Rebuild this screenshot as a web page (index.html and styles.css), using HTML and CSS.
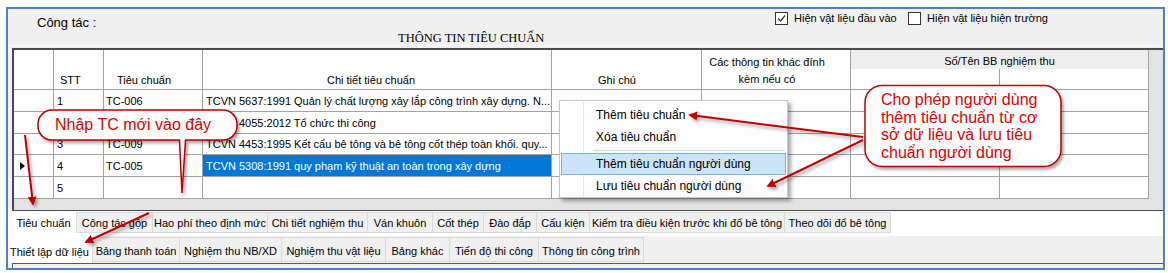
FILE: index.html
```html
<!DOCTYPE html>
<html lang="vi">
<head>
<meta charset="utf-8">
<title>Thông tin tiêu chuẩn</title>
<link rel="stylesheet" href="styles.css">
</head>
<body>
<div class="window">
  <div class="top">
    <div class="top-row">
      <div class="cong-tac">Công tác :</div>
      <div class="checks">
        <div class="check check-first">
          <span class="box"><svg width="11" height="11" viewBox="0 0 11 11"><polyline points="2,5.5 4.5,8 9,2.5" fill="none" stroke="#333" stroke-width="1.2"/></svg></span>
          <span>Hiện vật liệu đầu vào</span>
        </div>
        <div class="check">
          <span class="box"></span>
          <span>Hiện vật liệu hiện trường</span>
        </div>
      </div>
    </div>
    <div class="title">THÔNG TIN TIÊU CHUẨN</div>
    <div class="top-sep"></div>
  </div>

  <div class="grid-panel">
    <div class="grid">
      <div class="c h h-rh"></div>
      <div class="c h h-stt">STT</div>
      <div class="c h h-tc">Tiêu chuẩn</div>
      <div class="c h h-ct">Chi tiết tiêu chuẩn</div>
      <div class="c h h-gc">Ghi chú</div>
      <div class="c h h-kh">Các thông tin khác đính<br>kèm nếu có</div>
      <div class="c band">Số/Tên BB nghiệm thu</div>
      <div class="c sub"></div>
      <div class="c sub"></div>

      <div class="c rh"></div><div class="c">1</div><div class="c">TC-006</div><div class="c">TCVN 5637:1991 Quản lý chất lượng xây lắp công trình xây dựng. N...</div><div class="c"></div><div class="c"></div><div class="c"></div><div class="c"></div>
      <div class="c rh"></div><div class="c"></div><div class="c"></div><div class="c">TCVN 4055:2012 Tổ chức thi công</div><div class="c"></div><div class="c"></div><div class="c"></div><div class="c"></div>
      <div class="c rh"></div><div class="c">3</div><div class="c">TC-009</div><div class="c">TCVN 4453:1995 Kết cấu bê tông và bê tông cốt thép toàn khối. quy...</div><div class="c"></div><div class="c"></div><div class="c"></div><div class="c"></div>
      <div class="c rh"><span class="cur"></span></div><div class="c">4</div><div class="c">TC-005</div><div class="c selcell">TCVN 5308:1991 quy phạm kỹ thuật an toàn trong xây dựng</div><div class="c"></div><div class="c"></div><div class="c"></div><div class="c"></div>
      <div class="c rh"></div><div class="c">5</div><div class="c"></div><div class="c"></div><div class="c"></div><div class="c"></div><div class="c"></div><div class="c"></div>
    </div>
  </div>

  <div class="tabs tabs-inner">
    <div class="tab sel">Tiêu chuẩn</div>
    <div class="tab">Công tác gộp</div>
    <div class="tab">Hao phí theo định mức</div>
    <div class="tab">Chi tiết nghiệm thu</div>
    <div class="tab">Ván khuôn</div>
    <div class="tab">Cốt thép</div>
    <div class="tab">Đào đắp</div>
    <div class="tab">Cấu kiện</div>
    <div class="tab">Kiểm tra điều kiện trước khi đổ bê tông</div>
    <div class="tab">Theo dõi đổ bê tông</div>
  </div>

  <div class="tabs tabs-outer">
    <div class="tab sel">Thiết lập dữ liệu</div>
    <div class="tab">Bảng thanh toán</div>
    <div class="tab">Nghiệm thu NB/XD</div>
    <div class="tab">Nghiệm thu vật liệu</div>
    <div class="tab">Bảng khác</div>
    <div class="tab">Tiến độ thi công</div>
    <div class="tab">Thông tin công trình</div>
  </div>

  <div class="bottom"></div>
</div>

<div class="ctx-menu">
  <div class="mi">Thêm tiêu chuẩn</div>
  <div class="mi">Xóa tiêu chuẩn</div>
  <div class="sep"></div>
  <div class="mi hl">Thêm tiêu chuẩn người dùng</div>
  <div class="mi">Lưu tiêu chuẩn người dùng</div>
</div>

<svg class="overlay" width="1168" height="273" viewBox="0 0 1168 273">
  <defs>
    <filter id="sh" x="-20%" y="-20%" width="140%" height="160%">
      <feDropShadow dx="2" dy="2.5" stdDeviation="1.5" flood-color="#000" flood-opacity="0.35"/>
    </filter>
    <marker id="ah" viewBox="0 0 10 10" refX="8" refY="5" markerWidth="4.5" markerHeight="4.5" orient="auto">
      <path d="M0,0 L10,5 L0,10 z" fill="#c00000"/>
    </marker>
  </defs>
  <path filter="url(#sh)" d="M52,110 H223 A14,14 0 0 1 237,124 V126 A14,14 0 0 1 223,140 H185.5 L182,193 L179.5,140 H52 A14,14 0 0 1 38,126 V124 A14,14 0 0 1 52,110 Z" fill="#fff" stroke="#c00000" stroke-width="1.5"/>
  <rect filter="url(#sh)" x="865" y="85.5" width="196" height="81" rx="17" ry="17" fill="#fff" stroke="#c00000" stroke-width="1.5"/>
  <g filter="url(#sh)" stroke="#c00000" stroke-width="2" fill="none">
    <line x1="863" y1="137" x2="690" y2="115" marker-end="url(#ah)"/>
    <line x1="863" y1="140" x2="768" y2="186" marker-end="url(#ah)"/>
    <line x1="25" y1="135" x2="33" y2="204" marker-end="url(#ah)"/>
    <line x1="149" y1="213" x2="86" y2="242" marker-end="url(#ah)"/>
  </g>
</svg>

<div class="callout callout-left">Nhập TC mới vào đây</div>
<div class="callout callout-right">Cho phép người dùng<br>thêm tiêu chuẩn từ cơ<br>sở dữ liệu và lưu tiêu<br>chuẩn người dùng</div>
</body>
</html>
```

FILE: styles.css
```css
* { box-sizing: border-box; }
html, body { margin: 0; padding: 0; }
body {
  width: 1168px;
  height: 273px;
  background: #fff;
  font-family: "Liberation Sans", Arial, sans-serif;
  font-size: 11px;
  color: #000;
  position: relative;
  overflow: hidden;
}

.window {
  margin: 7px 0 0 6px;
  width: 1159px;
  height: 263px;
  border: 2px solid #4f80c4;
  background: #f0f0f0;
  display: flex;
  flex-direction: column;
}

/* top section */
.top { height: 39px; flex: none; display: flex; flex-direction: column; }
.top-row { height: 21px; display: grid; grid-template-columns: 767px auto; }
.cong-tac { font-size: 13px; line-height: 15px; padding: 6px 0 0 29px; }
.checks { display: flex; padding-top: 3px; }
.check { display: flex; align-items: center; height: 13px; line-height: 13px; font-size: 11px; }
.check-first { width: 133px; }
.box {
  width: 13px; height: 13px;
  border: 1px solid #333;
  background: #fff;
  margin-right: 6px;
  display: flex; align-items: center; justify-content: center;
}
.title {
  height: 15px;
  line-height: 15px;
  font-family: "Liberation Serif", "Times New Roman", serif;
  font-size: 12.5px;
  padding-left: 390px;
  padding-top: 1px;
}
.top-sep { height: 1px; background: #fbfbfb; margin-bottom: 2px; }

/* grid */
.grid-panel {
  flex: none;
  height: 163px;
  margin-left: 4px;
  border-top: 2px solid #4a4a4a;
  border-left: 2px solid #4a4a4a;
  border-bottom: 1px solid #4a4a4a;
  background: #e3e3e3;
}
.grid {
  display: grid;
  width: 1135px;
  grid-template-columns: 40px 50px 99px 349px 150px 149px 149px 149px;
  grid-template-rows: 19px 21px 22px 22px 21px 22px 22px;
}
.c {
  background: #fff;
  border-right: 1px solid #a3a3a3;
  border-bottom: 1px solid #a3a3a3;
  display: flex;
  align-items: center;
  padding-left: 3px;
  white-space: nowrap;
  overflow: hidden;
  font-size: 11px;
}
.c:nth-child(8n+4) { padding-left: 2px; }
.h { grid-row: span 2; align-items: flex-end; padding-bottom: 2px; line-height: 13px; }
.h-stt { padding-left: 6px; }
.h-tc { padding-left: 13px; }
.h-ct { justify-content: center; padding-right: 14px; }
.h-gc { padding-left: 46px; }
.h-kh { justify-content: center; text-align: center; padding-right: 21px; line-height: 17px; padding-bottom: 1px; }
.band {
  grid-column: span 2;
  background: #eeeeee;
  border-bottom: none;
  justify-content: center;
  padding-left: 0;
  padding-top: 2px;
}
.rh { padding-left: 6px; }
.cur {
  width: 0; height: 0;
  border-left: 5px solid #000;
  border-top: 4.5px solid transparent;
  border-bottom: 4.5px solid transparent;
}
.selcell { background: #0078d7; color: #fff; }

/* tabs */
.tabs { display: flex; flex: none; }
.tab {
  display: flex;
  align-items: center;
  justify-content: center;
  white-space: nowrap;
  background: #f0f0f0;
  border: 1px solid #d9d9d9;
  border-left: none;
  font-size: 11px;
}
.tab.sel { background: #fff; border-color: transparent; }
.tab.sel + .tab { border-left: 1px solid #d9d9d9; }

.tabs-inner { height: 25px; background: #fff; padding: 1px 0 0 4px; }
.tabs-inner .tab { height: 21px; }
.tabs-inner .tab:nth-child(1) { width: 64px; }
.tabs-inner .tab:nth-child(2) { width: 77px; }
.tabs-inner .tab:nth-child(3) { width: 115px; }
.tabs-inner .tab:nth-child(4) { width: 100px; }
.tabs-inner .tab:nth-child(5) { width: 65px; }
.tabs-inner .tab:nth-child(6) { width: 51px; }
.tabs-inner .tab:nth-child(7) { width: 53px; }
.tabs-inner .tab:nth-child(8) { width: 53px; }
.tabs-inner .tab:nth-child(9) { width: 195px; }
.tabs-inner .tab:nth-child(10) { width: 106px; }

.tabs-outer { height: 27px; background: #f0f0f0; }
.tabs-outer .tab { height: 25px; margin-top: 1px; padding-top: 2px; }
.tabs-outer .tab.sel { height: 27px; margin-top: 0; padding-top: 4px; }
.tabs-outer .tab:nth-child(1) { width: 84px; }
.tabs-outer .tab:nth-child(2) { width: 88px; }
.tabs-outer .tab:nth-child(3) { width: 102px; }
.tabs-outer .tab:nth-child(4) { width: 104px; }
.tabs-outer .tab:nth-child(5) { width: 64px; }
.tabs-outer .tab:nth-child(6) { width: 89px; }
.tabs-outer .tab:nth-child(7) { width: 105px; }

.bottom {
  flex: 1;
  margin-left: 4px;
  border-top: 1px solid #5a5a5a;
  border-left: 1px solid #5a5a5a;
}

/* context menu */
.ctx-menu {
  position: absolute;
  left: 559px;
  top: 100px;
  width: 229px;
  background: #fdfdfd;
  border: 1px solid #c6c6c6;
  padding: 3px 1px 0 1px;
  box-shadow: 3px 3px 4px rgba(0, 0, 0, 0.35);
  font-size: 12px;
}
.ctx-menu::before {
  content: "";
  position: absolute;
  left: 23px;
  top: 1px;
  bottom: 1px;
  width: 1px;
  background: #e6e6e6;
}
.mi {
  position: relative;
  height: 22px;
  line-height: 20px;
  padding-left: 34px;
  border: 1px solid transparent;
  white-space: nowrap;
}
.mi.hl { background: #cce4f7; border-color: #78afe4; }
.sep { height: 5px; margin-left: 32px; margin-right: 1px; border-bottom: 1px solid #d7d7d7; position: relative; top: -2px; }

/* overlay */
.overlay { position: absolute; left: 0; top: 0; pointer-events: none; }
.callout {
  position: absolute;
  color: #e00000;
  font-family: "Liberation Sans", Arial, sans-serif;
  font-size: 16px;
  white-space: nowrap;
}
.callout-left {
  left: 38px;
  top: 110px;
  width: 199px;
  height: 30px;
  line-height: 30px;
  padding-left: 17px;
}
.callout-right {
  left: 865px;
  top: 85px;
  width: 196px;
  line-height: 17.7px;
  padding: 6px 0 0 16px;
}
```
